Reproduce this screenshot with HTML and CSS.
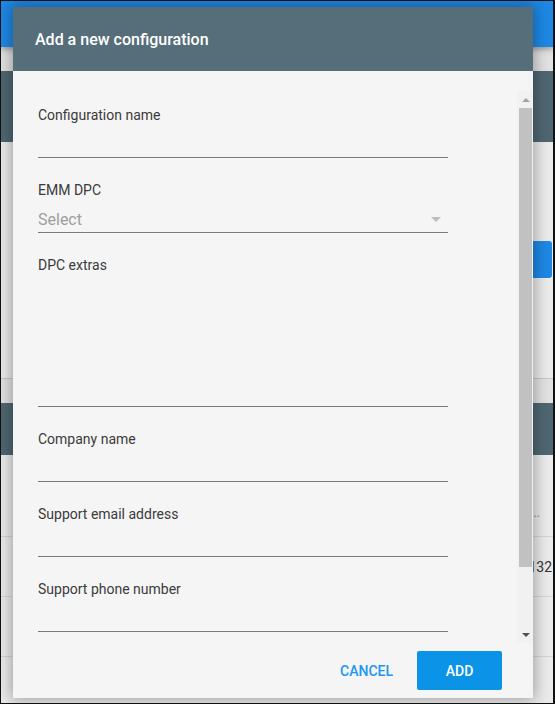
FILE: index.html
```html
<!DOCTYPE html>
<html>
<head>
<meta charset="utf-8">
<link rel="stylesheet" href="styles.css">
</head>
<body>
<div class="screen">
  <div class="page">
    <div class="topbar"></div>
    <div class="main">
      <div class="card card-one">
        <div class="card-head"></div>
        <div class="card-body">
          <div class="bg-button"></div>
        </div>
      </div>
      <div class="card card-two">
        <div class="card-head short"></div>
        <div class="row row-first"><span class="row-text dots">Configuration details...</span></div>
        <div class="row"><span class="row-text">Device 4132</span></div>
        <div class="row"></div>
        <div class="row foot"><span class="more">More</span></div>
      </div>
    </div>
  </div>

  <div class="dialog">
    <div class="dialog-head">Add a new configuration</div>
    <div class="dialog-body">
      <div class="scroll">
        <div class="form">
          <div class="field">
            <div class="label">Configuration name</div>
            <div class="input"></div>
          </div>
          <div class="field">
            <div class="label">EMM DPC</div>
            <div class="input select">
              <span class="placeholder">Select</span>
              <span class="caret"></span>
            </div>
          </div>
          <div class="field">
            <div class="label">DPC extras</div>
            <div class="input textarea"></div>
          </div>
          <div class="field">
            <div class="label">Company name</div>
            <div class="input"></div>
          </div>
          <div class="field">
            <div class="label">Support email address</div>
            <div class="input"></div>
          </div>
          <div class="field">
            <div class="label">Support phone number</div>
            <div class="input"></div>
          </div>
        </div>
        <div class="scrollbar">
          <div class="sb-btn"><span class="sb-up"></span></div>
          <div class="sb-track"><div class="sb-thumb"></div></div>
          <div class="sb-btn"><span class="sb-down"></span></div>
        </div>
      </div>
      <div class="actions">
        <button class="btn-cancel">CANCEL</button>
        <button class="btn-add">ADD</button>
      </div>
    </div>
  </div>
</div>
</body>
</html>
```
FILE: styles.css
```css
* { box-sizing: border-box; }
html, body { margin: 0; padding: 0; }
body { font-family: Roboto, "Noto Sans", Arial, sans-serif; background: #000; }

.screen {
  position: relative;
  width: 555px;
  height: 704px;
  overflow: hidden;
  border: 1px solid #111;
  border-right-width: 2px;
  background: #e2e2e2;
}

/* background page */
.page { display: flex; flex-direction: column; height: 100%; }
.topbar {
  height: 46px;
  flex: none;
  background: #1e88e5;
  box-shadow: 0 2px 6px rgba(0,0,0,0.35);
  position: relative;
  z-index: 1;
}
.main { padding-top: 24px; display: flex; flex-direction: column; }
.card { background: #ebebeb; }
.card-one { border-bottom: 1px solid #c9c9c9; }
.card-head { height: 71px; background: #4f6772; }
.card-head.short { height: 52px; }
.card-body {
  height: 236px;
  display: flex;
  justify-content: flex-end;
  align-items: flex-start;
  padding-top: 99px;
  padding-right: 1px;
}
.bg-button { width: 120px; height: 37px; background: #1e88e5; border-radius: 3px; }
.card-two { margin-top: 24px; }
.row {
  height: 60px;
  border-bottom: 1px solid #d6d6d6;
  display: flex;
  align-items: center;
  justify-content: flex-end;
  font-size: 14px;
  color: #333;
  white-space: nowrap;
  overflow: hidden;
  padding-right: 1px;
}
.row-first { height: 82px; align-items: flex-end; padding-bottom: 16px; }
.dots { color: #8a8a8a; font-size: 12px; padding-right: 12px; }
.row.foot { border-bottom: none; justify-content: flex-start; align-items: flex-end; padding-left: 174px; height: 60px; }
.more { font-size: 14px; color: #333; margin-bottom: -12px; }

/* dialog */
.dialog {
  position: absolute;
  left: 12px;
  top: 6px;
  width: 520px;
  height: 691px;
  display: flex;
  flex-direction: column;
  background: #f5f5f5;
  box-shadow: 0 0 14px 2px rgba(0,0,0,0.32);
  z-index: 2;
}
.dialog-head {
  height: 64px;
  flex: none;
  background: #566e7a;
  color: #fff;
  font-size: 16px;
  font-weight: 500;
  display: flex;
  align-items: center;
  padding-left: 22px;
}
.dialog-body { flex: 1; display: flex; flex-direction: column; }
.scroll { margin-top: 20px; height: 552px; display: flex; flex: none; }
.form { flex: 1; overflow: hidden; padding: 14px 0 0 25px; }
.field { margin-bottom: 22px; width: 410px; }
.label { font-size: 14px; line-height: 20px; color: #3b3b3b; }
.input { height: 33px; border-bottom: 1px solid #7a7a7a; }
.select { display: flex; align-items: flex-end; justify-content: space-between; padding-bottom: 3px; }
.placeholder { font-size: 16px; line-height: 19px; color: #9e9e9e; }
.caret {
  width: 0; height: 0;
  border-left: 5px solid transparent;
  border-right: 5px solid transparent;
  border-top: 5px solid #bdbdbd;
  margin-right: 7px;
  margin-bottom: 7px;
}
.textarea { height: 132px; }

.scrollbar {
  width: 16px;
  flex: none;
  background: #f1f1f1;
  display: flex;
  flex-direction: column;
  padding: 0 1px 0 2px;
}
.sb-btn { height: 17px; display: flex; align-items: center; justify-content: center; flex: none; }
.sb-up { width: 0; height: 0; border-left: 4px solid transparent; border-right: 4px solid transparent; border-bottom: 4px solid #a3a3a3; }
.sb-down { width: 0; height: 0; border-left: 4px solid transparent; border-right: 4px solid transparent; border-top: 4px solid #505050; }
.sb-track { flex: 1; }
.sb-thumb { height: 459px; background: #c1c1c1; }

.actions {
  flex: 1;
  display: flex;
  justify-content: flex-end;
  align-items: center;
  padding-right: 31px;
}
.btn-cancel {
  font-family: inherit;
  font-size: 14px;
  font-weight: 500;
  color: #2196f3;
  background: none;
  border: none;
  padding: 0;
  margin-right: 24px;
}
.btn-add {
  font-family: inherit;
  font-size: 14px;
  font-weight: 500;
  color: #fff;
  background: #0b93e8;
  border: none;
  border-radius: 2px;
  width: 85px;
  height: 39px;
  padding: 0;
}
```
